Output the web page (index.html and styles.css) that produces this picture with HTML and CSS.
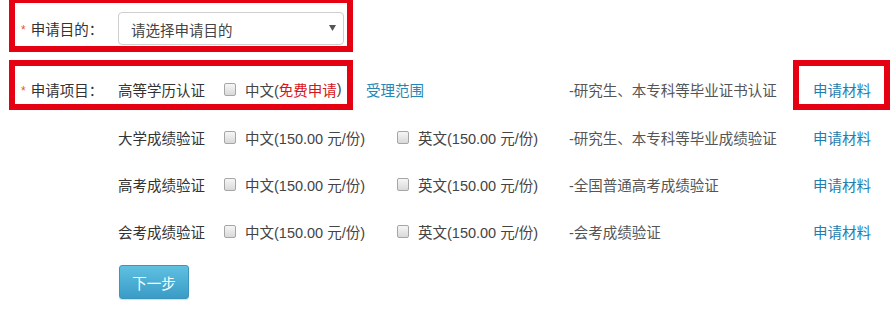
FILE: index.html
```html
<!DOCTYPE html>
<html lang="zh-CN">
<head>
<meta charset="utf-8">
<title>申请</title>
<link rel="stylesheet" href="styles.css">
</head>
<body>
<div class="page">
  <div class="purpose">
    <div class="label"><span class="star">*</span>申请目的<span class="colon">：</span></div>
    <div class="select">
      <span>请选择申请目的</span>
      <svg class="arrow" width="7" height="6" viewBox="0 0 7 6"><path d="M0 0H7L3.5 6Z" fill="#555"/></svg>
    </div>
  </div>

  <div class="row first">
    <div class="hl main">
      <div class="label"><span class="star">*</span>申请项目<span class="colon">：</span></div>
      <div class="name">高等学历认证</div>
      <label class="opt cnfree"><input type="checkbox" class="cb">中文(<span class="free">免费申请</span>)</label>
    </div>
    <a class="scope">受理范围</a>
    <div class="desc d1">-研究生、本专科等毕业证书认证</div>
    <div class="hl linkbox"><a class="mat">申请材料</a></div>
  </div>

  <div class="row r3">
    <div class="name">大学成绩验证</div>
    <label class="opt cn"><input type="checkbox" class="cb">中文(150.00 元/份)</label>
    <label class="opt en"><input type="checkbox" class="cb">英文(150.00 元/份)</label>
    <div class="desc">-研究生、本专科等毕业成绩验证</div>
    <a class="mat">申请材料</a>
  </div>

  <div class="row">
    <div class="name">高考成绩验证</div>
    <label class="opt cn"><input type="checkbox" class="cb">中文(150.00 元/份)</label>
    <label class="opt en"><input type="checkbox" class="cb">英文(150.00 元/份)</label>
    <div class="desc">-全国普通高考成绩验证</div>
    <a class="mat">申请材料</a>
  </div>

  <div class="row">
    <div class="name">会考成绩验证</div>
    <label class="opt cn"><input type="checkbox" class="cb">中文(150.00 元/份)</label>
    <label class="opt en"><input type="checkbox" class="cb">英文(150.00 元/份)</label>
    <div class="desc">-会考成绩验证</div>
    <a class="mat">申请材料</a>
  </div>

  <div class="actions">
    <button class="next" type="button">下一步</button>
  </div>
</div>
</body>
</html>
```

FILE: styles.css
```css
* { box-sizing: border-box; }

html, body {
  margin: 0;
  padding: 0;
  background: #fff;
  overflow: hidden;
}

body {
  font-family: "Liberation Sans", "Noto Sans CJK SC", sans-serif;
  font-size: 14.5px;
  color: #333;
  width: 896px;
  height: 320px;
}

.page {
  padding-left: 9px;
}

.purpose {
  margin-top: -3px;
  width: 344px;
  height: 55px;
  border: 6px solid #e50012;
  padding: 9px 3px 1px 6px;
  display: flex;
  align-items: center;
}

.label {
  width: 97px;
  flex: none;
  color: #333;
  white-space: nowrap;
}

.colon {
  font-family: "Noto Sans CJK TC", sans-serif;
}

.star {
  color: #e8562a;
  font-size: 12px;
  margin-right: 5px;
  position: relative;
  top: -1px;
}

.select {
  width: 226px;
  height: 33px;
  border: 1px solid #cfcfcf;
  border-radius: 4px;
  display: flex;
  align-items: center;
  justify-content: space-between;
  padding: 2px 7px 0 12px;
  color: #444;
  background: #fff;
}

.arrow {
  margin-top: -3px;
}

.row {
  display: flex;
  align-items: center;
  height: 47px;
  padding-left: 109px;
  white-space: nowrap;
}

.row.first {
  margin-top: 8px;
  height: 50px;
  padding-left: 0;
  align-items: stretch;
}

.row.r3 {
  margin-top: 4px;
}

.hl {
  border: 6px solid #e50012;
  display: flex;
  align-items: center;
  padding-top: 8px;
}

.hl.main {
  width: 344px;
  padding-left: 6px;
}

.name {
  width: 106px;
  flex: none;
  color: #333;
}

.opt {
  display: flex;
  align-items: center;
  color: #444;
  flex: none;
}

.opt.cn { width: 173px; }
.opt.en { width: 172px; }

.cb {
  appearance: none;
  -webkit-appearance: none;
  width: 12px;
  height: 13px;
  margin: 0 9px 0 0;
  border: 1px solid #a6a6a6;
  border-radius: 2px;
  background: linear-gradient(#f6f6f6, #d9d9d9);
  flex: none;
}

.free {
  color: #d8141b;
}

.scope {
  color: #2587b5;
  width: 216px;
  padding-left: 13px;
  display: flex;
  align-items: center;
  padding-top: 8px;
}

.desc {
  width: 244px;
  flex: none;
  color: #555;
}

.desc.d1 {
  width: 224px;
  display: flex;
  align-items: center;
  padding-top: 8px;
}

.mat {
  color: #1f7eae;
}

.hl.linkbox {
  width: 97px;
  padding-left: 14px;
}

.actions {
  padding-left: 110px;
  margin-top: 10px;
}

.next {
  width: 70px;
  height: 34px;
  border: 1px solid #3b95bd;
  border-radius: 3px;
  background: linear-gradient(#5fc0e2, #3a9cc5);
  color: #fff;
  font-family: "Liberation Sans", "Noto Sans CJK SC", sans-serif;
  font-size: 14.5px;
  padding: 0;
  box-shadow: 0 1px 1px rgba(0,0,0,0.15);
}
```
